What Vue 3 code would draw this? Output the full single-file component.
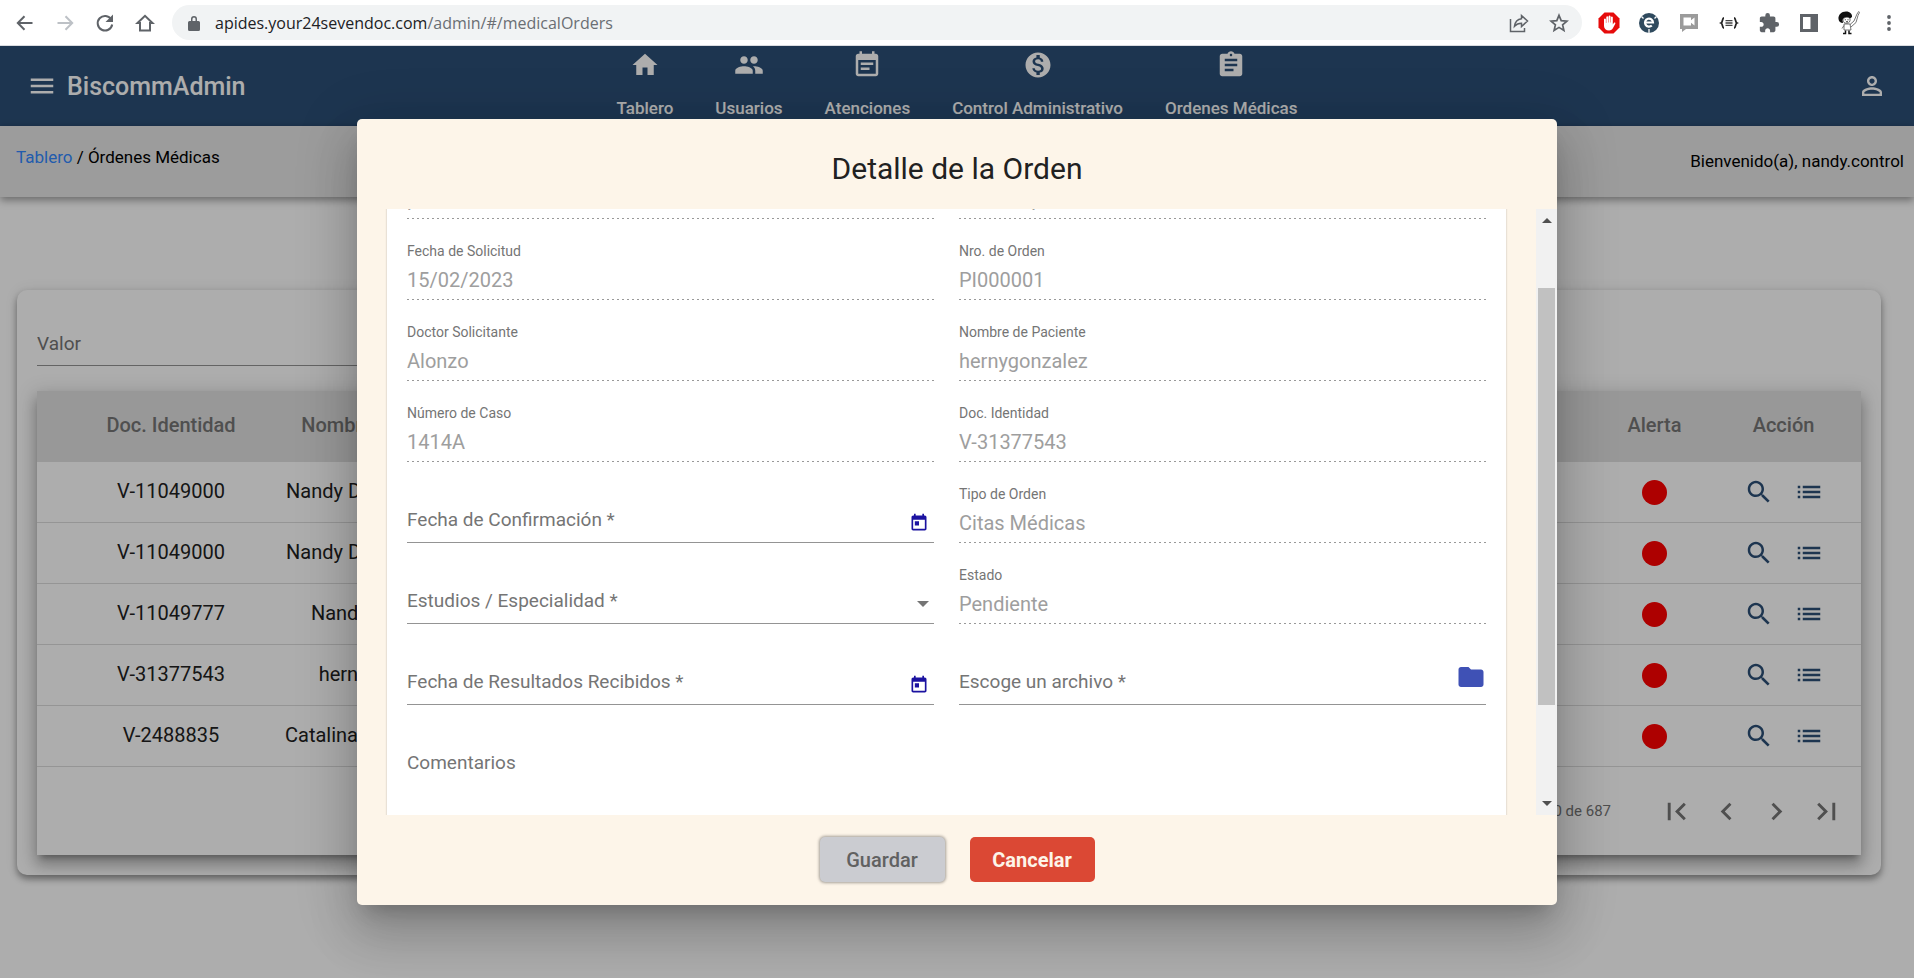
<script setup>
import { onMounted, ref } from 'vue'

const navItems = [
  { label: 'Tablero', path: 'M10 20v-6h4v6h5v-8h3L12 3 2 12h3v8z' },
  { label: 'Usuarios', path: 'M16 11c1.66 0 2.99-1.34 2.99-3S17.66 5 16 5s-3 1.34-3 3 1.34 3 3 3zm-8 0c1.66 0 2.99-1.34 2.99-3S9.66 5 8 5 5 6.34 5 8s1.34 3 3 3zm0 2c-2.33 0-7 1.17-7 3.5V19h14v-2.5c0-2.33-4.67-3.5-7-3.5zm8 0c-.29 0-.62.02-.97.05 1.16.84 1.97 1.97 1.97 3.45V19h6v-2.5c0-2.33-4.67-3.5-7-3.5z' },
  { label: 'Atenciones', path: 'M17 10H7v2h10v-2zm2-7h-1V1h-2v2H8V1H6v2H5c-1.11 0-2 .9-2 2v14c0 1.1.89 2 2 2h14c1.1 0 2-.9 2-2V5c0-1.1-.9-2-2-2zm0 16H5V8h14v11zm-5-5H7v2h7v-2z' },
  { label: 'Control Administrativo', path: 'M12 2C6.48 2 2 6.48 2 12s4.48 10 10 10 10-4.48 10-10S17.52 2 12 2zm1.41 16.09V20h-2.67v-1.93c-1.71-.36-3.16-1.46-3.27-3.4h1.96c.1 1.05.82 1.87 2.65 1.87 1.96 0 2.4-.98 2.4-1.59 0-.83-.44-1.61-2.67-2.14-2.48-.6-4.18-1.62-4.18-3.67 0-1.72 1.39-2.84 3.11-3.21V4h2.67v1.95c1.86.45 2.79 1.86 2.85 3.39H14.3c-.05-1.11-.64-1.87-2.22-1.87-1.5 0-2.4.68-2.4 1.64 0 .84.65 1.39 2.67 1.91s4.18 1.39 4.18 3.91c-.01 1.83-1.38 2.83-3.12 3.16z' },
  { label: 'Ordenes Médicas', path: 'M19 3h-4.18C14.4 1.84 13.3 1 12 1c-1.3 0-2.4.84-2.82 2H5c-1.1 0-2 .9-2 2v14c0 1.1.9 2 2 2h14c1.1 0 2-.9 2-2V5c0-1.1-.9-2-2-2zm-7 0c.55 0 1 .45 1 1s-.45 1-1 1-1-.45-1-1 .45-1 1-1zm2 14H7v-2h7v2zm3-4H7v-2h10v2zm0-4H7V7h10v2z' },
]

const rows = [
  { id: 'V-11049000', name: 'Nandy Dugarte Torres' },
  { id: 'V-11049000', name: 'Nandy Dugarte Torres' },
  { id: 'V-11049777', name: 'Nandy González' },
  { id: 'V-31377543', name: 'hernygonzalez' },
  { id: 'V-2488835', name: 'Catalina Hernández R.' },
]

const pageButtons = [
  { label: 'Primera página', path: 'M18.41 16.59L13.82 12l4.59-4.59L17 6l-6 6 6 6zM6 6h2v12H6z' },
  { label: 'Página anterior', path: 'M15.41 7.41L14 6l-6 6 6 6 1.41-1.41L10.83 12z' },
  { label: 'Página siguiente', path: 'M10 6L8.59 7.41 13.17 12l-4.58 4.59L10 18l6-6z' },
  { label: 'Última página', path: 'M5.59 7.41L10.18 12l-4.59 4.59L7 18l6-6-6-6zM16 6h2v12h-2z' },
]

const fields = [
  { id: 'plan', label: 'Aseguradora', value: 'particular' },
  { id: 'servicio', label: 'Servicio', value: 'Citas Especiales' },
  { id: 'solicitud', label: 'Fecha de Solicitud', value: '15/02/2023' },
  { id: 'orden', label: 'Nro. de Orden', value: 'PI000001' },
  { id: 'doctor', label: 'Doctor Solicitante', value: 'Alonzo' },
  { id: 'paciente', label: 'Nombre de Paciente', value: 'hernygonzalez' },
  { id: 'caso', label: 'Número de Caso', value: '1414A' },
  { id: 'identidad', label: 'Doc. Identidad', value: 'V-31377543' },
  { id: 'confirmacion', label: 'Fecha de Confirmación *', kind: 'date' },
  { id: 'tipo', label: 'Tipo de Orden', value: 'Citas Médicas' },
  { id: 'estudios', label: 'Estudios / Especialidad *', kind: 'select' },
  { id: 'estado', label: 'Estado', value: 'Pendiente' },
  { id: 'resultados', label: 'Fecha de Resultados Recibidos *', kind: 'date' },
  { id: 'archivo', label: 'Escoge un archivo *', kind: 'file' },
]

const scroller = ref(null)
onMounted(() => {
  scroller.value.scrollTop = 84
})
</script>

<template>
  <div class="window">
    <header class="browser">
      <button class="tool" aria-label="Atrás">
        <svg viewBox="0 0 20 20" width="20" height="20"><path d="M17.5 10H3M9.5 3.2 2.8 10l6.7 6.8" fill="none" stroke="#5f6368" stroke-width="2" /></svg>
      </button>
      <button class="tool" aria-label="Adelante">
        <svg viewBox="0 0 20 20" width="20" height="20"><path d="M2.5 10H17M10.5 3.2 17.2 10l-6.7 6.8" fill="none" stroke="#bdc1c6" stroke-width="2" /></svg>
      </button>
      <button class="tool" aria-label="Recargar">
        <svg viewBox="0 0 20 20" width="20" height="20"><path d="M16.3 6.5A7.3 7.3 0 1 0 17.2 11.5" fill="none" stroke="#5f6368" stroke-width="2" /><path d="M18 1.5V9h-7.5z" fill="#5f6368" /></svg>
      </button>
      <button class="tool" aria-label="Inicio">
        <svg viewBox="0 0 20 20" width="20" height="20"><path d="M2.5 10 10 2.8 17.5 10H15v7.5H5V10z" fill="none" stroke="#5f6368" stroke-width="2" /></svg>
      </button>
      <div class="omnibox">
        <svg class="lock" viewBox="0 0 12 16" width="12" height="16"><path d="M1.5 6H3V4a3 3 0 0 1 6 0v2h1.5A1.5 1.5 0 0 1 12 7.5v7a1.5 1.5 0 0 1-1.5 1.5h-9A1.5 1.5 0 0 1 0 14.5v-7A1.5 1.5 0 0 1 1.5 6zm3 0h3V4a1.5 1.5 0 0 0-3 0z" fill="#5f6368" /></svg>
        <p class="url"><span class="host">apides.your24sevendoc.com</span>/admin/#/medicalOrders</p>
        <button class="tool" aria-label="Compartir">
          <svg viewBox="0 0 20 20" width="20" height="20"><path d="M1.5 6v12.500h14V15M12.500 2.500l6 5.500-6 5.500v-3.300c-3 0-5 .8-7 3 .5-4 3-7 7-7.500z" fill="none" stroke="#5f6368" stroke-width="1.5" /></svg>
        </button>
        <button class="tool" aria-label="Marcar">
          <svg viewBox="0 0 20 20" width="20" height="20"><path d="m10 2.300 2.200 5.300 5.700.5-4.300 3.700 1.300 5.600-4.900-3-4.900 3 1.300-5.600L2.100 8.100l5.700-.5z" fill="none" stroke="#5f6368" stroke-width="1.7" /></svg>
        </button>
      </div>
      <div class="extensions">
        <button class="tool" aria-label="Bloqueador">
          <svg viewBox="0 0 22 22" width="22" height="22"><path d="M6.500.500h9l6 6v9l-6 6h-9l-6-6v-9z" fill="#e60b0b" /><path d="M6 12V7.200a1 1 0 0 1 1.900 0V11h.4V5a1 1 0 0 1 1.900 0v5.500h.4V4.300a1 1 0 0 1 1.900 0v6.200h.4V5.300a1 1 0 0 1 1.900 0v7.200l1-1.500c.7-.9 1.900-.3 1.500.7L15 16c-.7 1.600-2 2.500-4 2.500-3 0-5-2-5-4.500z" fill="#fff" /></svg>
        </button>
        <button class="tool" aria-label="Extensión e">
          <svg viewBox="0 0 22 22" width="22" height="22"><circle cx="11" cy="11" r="10" fill="#2f4a5e" /><path d="M7.500 10.500h7.500a4 4 0 1 0-1.200 3" fill="none" stroke="#fff" stroke-width="2.200" /><path d="M11 17v4M3.500 4.500l2 2M18.500 4.500l-2 2" stroke="#fff" stroke-width="1.300" /></svg>
        </button>
        <button class="tool" aria-label="Videollamada">
          <svg viewBox="0 0 20 20" width="20" height="20"><path d="M1 1h18v15H7l-4 3v-3H1z" fill="#9b9b9b" /><path d="M4.500 4.500h7.500v2.700l3.500-2.700v8L12 9.800v2.700H4.500z" fill="#fff" /></svg>
        </button>
        <button class="tool" aria-label="JSON">
          <svg viewBox="0 0 20 20" width="20" height="20"><path d="M5 5C2.800 5 4.300 9 2 10c2.300 1 .8 5 3 5M15 5c2.200 0 .7 4 3 5-2.300 1-.8 5-3 5" fill="none" stroke="#222" stroke-width="1.800" /><path d="M6.500 7.700h7M6.500 10h7M6.500 12.300h7" stroke="#444" stroke-width="1.300" /></svg>
        </button>
        <button class="tool" aria-label="Extensiones">
          <svg viewBox="0 0 24 24" width="22" height="22"><path d="M20.500 11H19V7c0-1.100-.9-2-2-2h-4V3.500a2.500 2.500 0 0 0-5 0V5H4c-1.100 0-1.990.9-1.990 2v3.800H3.500c1.490 0 2.700 1.210 2.700 2.700s-1.210 2.700-2.700 2.700H2V20c0 1.100.9 2 2 2h3.800v-1.500c0-1.490 1.210-2.700 2.700-2.700s2.700 1.210 2.700 2.700V22H17c1.100 0 2-.9 2-2v-4h1.500a2.500 2.500 0 0 0 0-5z" fill="#5f6368" /></svg>
        </button>
        <button class="tool" aria-label="Panel lateral">
          <svg viewBox="0 0 20 20" width="20" height="20"><path d="M1 1h18v18H1zM4 4v12h7.500V4z" fill="#5f6368" fill-rule="evenodd" /></svg>
        </button>
        <button class="tool" aria-label="Perfil">
          <svg viewBox="0 0 26 26" width="26" height="26"><path d="M2.500 9c-.5-4 3-7.500 7.500-7.500 4 0 6.500 2.500 6 5.500l-2 1.500c-3-2-6-1.500-7.500 1.500l.5 3c-2.500 0-4.200-1.500-4.500-4z" fill="#111" /><path d="M7 9.500C8 7 12 6.500 14 8.500c.5 3-.8 4.800-3.500 4.800C8.300 13.300 6.800 12 7 9.500z" fill="#fff" stroke="#333" stroke-width=".7" /><path d="M8 14h6l1 6H8zM14 14.500l4-3.500 3-7 1.700-2.500.8 1-1.500 3-2 7-5 4.500M8 15.500l-2 3" fill="#fff" stroke="#555" stroke-width=".8" /><path d="M9.500 20.500v3H7M13 20.500v3h2.500" fill="none" stroke="#111" stroke-width="1.500" /><path d="M8.800 9.800h1M11.500 9.800h1M10 11.800h2" stroke="#111" stroke-width=".9" /></svg>
        </button>
        <button class="tool" aria-label="Menú">
          <svg viewBox="0 0 20 20" width="20" height="20"><g fill="#5f6368"><circle cx="10" cy="4" r="1.900" /><circle cx="10" cy="10" r="1.900" /><circle cx="10" cy="16" r="1.900" /></g></svg>
        </button>
      </div>
    </header>

    <div class="page">
      <header class="topbar">
        <div class="brand">
          <button class="plain" aria-label="Abrir menú">
            <svg viewBox="0 0 24 24" width="30" height="30"><path d="M3 18h18v-2H3v2zm0-5h18v-2H3v2zm0-7v2h18V6H3z" fill="currentColor" /></svg>
          </button>
          <span>BiscommAdmin</span>
        </div>
        <nav class="nav">
          <a v-for="item in navItems" :key="item.label" href="#">
            <svg viewBox="0 0 24 24" width="30" height="30"><path :d="item.path" fill="currentColor" /></svg>
            <span>{{ item.label }}</span>
          </a>
        </nav>
        <button class="plain user" aria-label="Cuenta">
          <svg viewBox="0 0 24 24" width="30" height="30"><path d="M12 5.900c1.160 0 2.100.94 2.100 2.100s-.94 2.100-2.100 2.100S9.900 9.160 9.900 8s.94-2.100 2.100-2.100m0 9c2.970 0 6.100 1.460 6.100 2.100v1.100H5.900V17c0-.64 3.130-2.100 6.100-2.100M12 4C9.790 4 8 5.790 8 8s1.790 4 4 4 4-1.790 4-4-1.790-4-4-4zm0 9c-2.670 0-8 1.340-8 4v3h16v-3c0-2.660-5.330-4-8-4z" fill="currentColor" /></svg>
        </button>
      </header>

      <div class="subbar">
        <p class="crumbs"><a href="#">Tablero</a> / Órdenes Médicas</p>
        <p class="welcome">Bienvenido(a), nandy.control</p>
      </div>

      <main class="card">
        <input class="filter" type="text" placeholder="Valor" aria-label="Valor" />
        <div class="sheet">
          <table>
            <thead>
              <tr>
                <th class="c-id">Doc. Identidad</th>
                <th class="c-name">Nombre Completo</th>
                <th></th>
                <th class="c-alert">Alerta</th>
                <th class="c-act">Acción</th>
              </tr>
            </thead>
            <tbody>
              <tr v-for="(row, i) in rows" :key="i">
                <td class="c-id">{{ row.id }}</td>
                <td class="c-name">{{ row.name }}</td>
                <td></td>
                <td class="c-alert"><span class="dot"></span></td>
                <td class="c-act">
                  <div class="actions">
                    <button class="plain" aria-label="Ver">
                      <svg viewBox="0 0 24 24" width="30" height="30"><path d="M15.500 14h-.79l-.28-.27C15.410 12.590 16 11.110 16 9.500 16 5.910 13.090 3 9.500 3S3 5.910 3 9.500 5.910 16 9.500 16c1.610 0 3.090-.59 4.230-1.570l.27.28v.79l5 4.990L20.490 19l-4.990-5zm-6 0C7.010 14 5 11.990 5 9.500S7.010 5 9.500 5 14 7.010 14 9.500 11.990 14 9.500 14z" fill="currentColor" /></svg>
                    </button>
                    <button class="plain" aria-label="Lista">
                      <svg viewBox="0 0 24 24" width="30" height="30"><path d="M3 13h2v-2H3v2zm0 4h2v-2H3v2zm0-8h2V7H3v2zm4 4h14v-2H7v2zm0 4h14v-2H7v2zM7 7v2h14V7H7z" fill="currentColor" /></svg>
                    </button>
                  </div>
                </td>
              </tr>
            </tbody>
          </table>
          <footer class="pager">
            <span class="range">1 - 10 de 687</span>
            <button v-for="b in pageButtons" :key="b.label" class="plain" :aria-label="b.label">
              <svg viewBox="0 0 24 24" width="35" height="35"><path :d="b.path" fill="currentColor" /></svg>
            </button>
          </footer>
        </div>
      </main>

      <div class="backdrop">
        <section class="dialog" role="dialog" aria-labelledby="dialog-title">
          <h2 id="dialog-title">Detalle de la Orden</h2>
          <div class="body">
            <div ref="scroller" class="scroller">
              <form class="form">
                <div v-for="f in fields" :key="f.id" class="field" :class="{ filled: !f.kind }">
                  <label :for="f.id">{{ f.label }}</label>
                  <input v-if="!f.kind" :id="f.id" type="text" :value="f.value" disabled />
                  <select v-else-if="f.kind === 'select'" :id="f.id"></select>
                  <input v-else :id="f.id" type="text" />
                  <span v-if="f.kind === 'select'" class="caret"></span>
                  <button v-if="f.kind === 'date'" type="button" class="plain calendar" aria-label="Abrir calendario">
                    <svg viewBox="0 0 24 24" width="20" height="20"><path d="M19 3h-1V1h-2v2H8V1H6v2H5c-1.110 0-1.990.9-1.990 2L3 19c0 1.100.89 2 2 2h14c1.100 0 2-.9 2-2V5c0-1.100-.9-2-2-2zm0 16H5V8h14v11zM7 10h5v5H7z" fill="currentColor" /></svg>
                  </button>
                  <button v-if="f.kind === 'file'" type="button" class="plain folder" aria-label="Elegir archivo">
                    <svg viewBox="0 0 24 24" width="30" height="30"><path d="M10 4H4c-1.100 0-1.990.9-1.990 2L2 18c0 1.100.9 2 2 2h16c1.100 0 2-.9 2-2V8c0-1.100-.9-2-2-2h-8l-2-2z" fill="currentColor" /></svg>
                  </button>
                </div>
                <div class="field wide">
                  <label for="comentarios">Comentarios</label>
                  <textarea id="comentarios"></textarea>
                </div>
              </form>
            </div>
            <div class="scrollbar">
              <span class="arrow up"></span>
              <div class="track"><div class="thumb"></div></div>
              <span class="arrow down"></span>
            </div>
          </div>
          <div class="buttons">
            <button class="btn save">Guardar</button>
            <button class="btn cancel">Cancelar</button>
          </div>
        </section>
      </div>
    </div>
  </div>
</template>

<style>
body {
  overflow: hidden;
}
</style>

<style scoped>
.window {
  display: flex;
  flex-direction: column;
  height: 100vh;
  font-family: Roboto, "Liberation Sans", sans-serif;
  font-size: 20px;
  color: #212121;
}
.window * {
  box-sizing: border-box;
}
button,
input,
select,
textarea {
  font: inherit;
  color: inherit;
  border: 0;
  background: none;
  padding: 0;
  margin: 0;
}
p,
h2 {
  margin: 0;
}
svg {
  display: block;
}
.browser {
  display: flex;
  align-items: center;
  height: 46px;
  padding: 0 5px;
  background: #fff;
  border-bottom: 1px solid #dadce0;
}
.tool {
  display: grid;
  place-items: center;
  flex: none;
  width: 40px;
  height: 36px;
}
.omnibox {
  flex: 1;
  display: flex;
  align-items: center;
  height: 35px;
  margin-left: 7px;
  padding: 0 3px 0 16px;
  border-radius: 18px;
  background: #f1f3f4;
}
.url {
  flex: 1;
  margin-left: 15px;
  font-family: "Open Sans", "Noto Sans", sans-serif;
  font-size: 16px;
  line-height: 24px;
  color: #6a6e73;
}
.host {
  color: #202124;
}
.extensions {
  display: flex;
  margin-left: 7px;
}
.page {
  position: relative;
  flex: 1;
  min-height: 0;
  background: #fff;
}
.plain {
  display: grid;
  place-items: center;
}
.topbar {
  display: grid;
  grid-template-columns: 1fr auto 1fr;
  height: 80px;
  background: #2c4f76;
  color: #fff;
}
.brand {
  display: flex;
  align-items: center;
  gap: 10px;
  padding-left: 27px;
  font-size: 25px;
  font-weight: 500;
}
.nav {
  display: flex;
  gap: 42px;
  padding-top: 4px;
}
.nav a {
  display: flex;
  flex-direction: column;
  align-items: center;
  gap: 16px;
  color: inherit;
  font-size: 17px;
  font-weight: 500;
  line-height: 24px;
  text-decoration: none;
}
.user {
  justify-self: end;
  margin-right: 27px;
}
.subbar {
  display: flex;
  justify-content: space-between;
  height: 71px;
  padding: 19px 10px 0 16px;
  background: #e6e6e6;
  box-shadow: 0 3px 8px rgba(0, 0, 0, 0.4);
  color: #000;
  font-size: 17px;
  line-height: 24px;
}
.crumbs a {
  color: #3388ff;
  text-decoration: none;
}
.welcome {
  padding-top: 4px;
}
.card {
  margin: 93px 33px 0 17px;
  padding: 45px 20px 20px;
  border-radius: 10px;
  background: #fff;
  box-shadow: 0 4px 7px rgba(0, 0, 0, 0.4), 0 0 14px rgba(0, 0, 0, 0.08);
}
.filter {
  display: block;
  width: 50%;
  height: 31px;
  padding-bottom: 13px;
  border-bottom: 1px solid #949494;
  font-size: 19px;
}
.filter::placeholder {
  color: #757575;
  opacity: 1;
}
.sheet {
  margin-top: 25px;
  background: #fff;
  box-shadow: 0 6px 6px -4px rgba(0, 0, 0, 0.3), 0 10px 13px 1px rgba(0, 0, 0, 0.2), 0 4px 18px 3px rgba(0, 0, 0, 0.15);
}
table {
  width: 100%;
  table-layout: fixed;
  border-collapse: separate;
  border-spacing: 0;
}
th,
td {
  padding: 0;
  text-align: center;
  white-space: nowrap;
}
.c-id {
  width: 248px;
  padding: 0 10px 2px 30px;
}
.c-name {
  width: 196px;
  padding: 0 0 2px;
}
.c-alert {
  width: 143px;
}
.c-act {
  width: 135px;
  padding: 0 30px 0 10px;
}
th {
  height: 71px;
  background: #e0e0e0;
  color: #757575;
  font-weight: 500;
}
th,
th[class] {
  padding-bottom: 4px;
}
td {
  height: 61px;
  border-bottom: 1px solid #dcdcdc;
}
.dot {
  display: inline-block;
  width: 25px;
  height: 25px;
  border-radius: 50%;
  background: #f00;
  vertical-align: middle;
}
.actions {
  display: flex;
  justify-content: center;
  gap: 20px;
  color: #2c4f76;
}
.pager {
  display: flex;
  justify-content: flex-end;
  align-items: center;
  height: 88px;
  padding-right: 10px;
  color: #757575;
  font-size: 15px;
}
.range {
  margin-right: 40px;
}
.pager .plain {
  width: 50px;
  height: 50px;
}
.backdrop {
  position: absolute;
  inset: 0;
  display: flex;
  align-items: center;
  justify-content: center;
  background: rgba(0, 0, 0, 0.32);
}
.dialog {
  width: min(1200px, 90%);
  padding-top: 30px;
  border-radius: 5px;
  background: #fdf5e9;
  box-shadow: 0 14px 19px -9px rgba(0, 0, 0, 0.2), 0 30px 48px 4px rgba(0, 0, 0, 0.14), 0 11px 58px 10px rgba(0, 0, 0, 0.12);
}
h2 {
  margin-bottom: 20px;
  font-size: 30px;
  font-weight: 400;
  line-height: 40px;
  text-align: center;
}
.body {
  display: flex;
  height: 62vh;
}
.scroller {
  flex: 1;
  overflow: hidden;
  padding: 0 30px;
}
.form {
  display: grid;
  grid-template-columns: 1fr 1fr;
  column-gap: 25px;
  padding: 20px 20px 30px;
  background: #fff;
  box-shadow: 0 0 2px rgba(0, 0, 0, 0.25);
}
.field {
  position: relative;
  display: flex;
  flex-direction: column;
  justify-content: flex-end;
  height: 81px;
  padding-bottom: 7px;
}
.field input,
.field select {
  width: 100%;
  height: 34px;
  padding-bottom: 4px;
  border-bottom: 1px solid #949494;
  appearance: none;
}
.field label {
  position: absolute;
  left: 0;
  bottom: 18px;
  color: #757575;
  font-size: 19px;
  line-height: 24px;
}
.field.filled label {
  position: static;
  margin-bottom: 5px;
  font-size: 14px;
  line-height: 20px;
}
.field input:disabled {
  border-bottom-color: transparent;
  background: repeating-linear-gradient(90deg, #999 0 2px, transparent 2px 5px) left bottom / 100% 1px no-repeat border-box;
  color: #9e9e9e;
}
.calendar {
  position: absolute;
  right: 5px;
  bottom: 17px;
  color: #1b12a0;
}
.folder {
  position: absolute;
  right: 0;
  bottom: 20px;
  color: #3f51b5;
}
.caret {
  position: absolute;
  right: 5px;
  bottom: 24px;
  border: 6px solid transparent;
  border-top-color: #757575;
  border-bottom: 0;
}
.field.wide {
  grid-column: 1 / -1;
  height: 180px;
}
.field.wide label {
  top: 39px;
  bottom: auto;
}
.wide textarea {
  height: 120px;
  border-bottom: 1px solid #949494;
  resize: none;
}
.scrollbar {
  display: flex;
  flex-direction: column;
  align-items: center;
  width: 21px;
  padding: 9px 0;
  background: #f1f1f1;
}
.arrow {
  border: 5px solid transparent;
}
.up {
  border-top: 0;
  border-bottom-color: #505050;
}
.down {
  border-bottom: 0;
  border-top-color: #505050;
}
.track {
  flex: 1;
  width: 17px;
  margin: 7px 0;
}
.thumb {
  height: 74%;
  margin-top: 58px;
  background: #c1c1c1;
}
.buttons {
  display: flex;
  justify-content: center;
  gap: 25px;
  padding: 22px 0 23px;
}
.btn {
  width: 125px;
  height: 45px;
  border-radius: 5px;
  font-weight: 500;
}
.save {
  background: #cbccd1;
  box-shadow: 0 0 3px 1px rgba(0, 0, 0, 0.35);
  color: #616161;
}
.cancel {
  background: #db4834;
  color: #fdf5e9;
  font-weight: 700;
}
</style>
